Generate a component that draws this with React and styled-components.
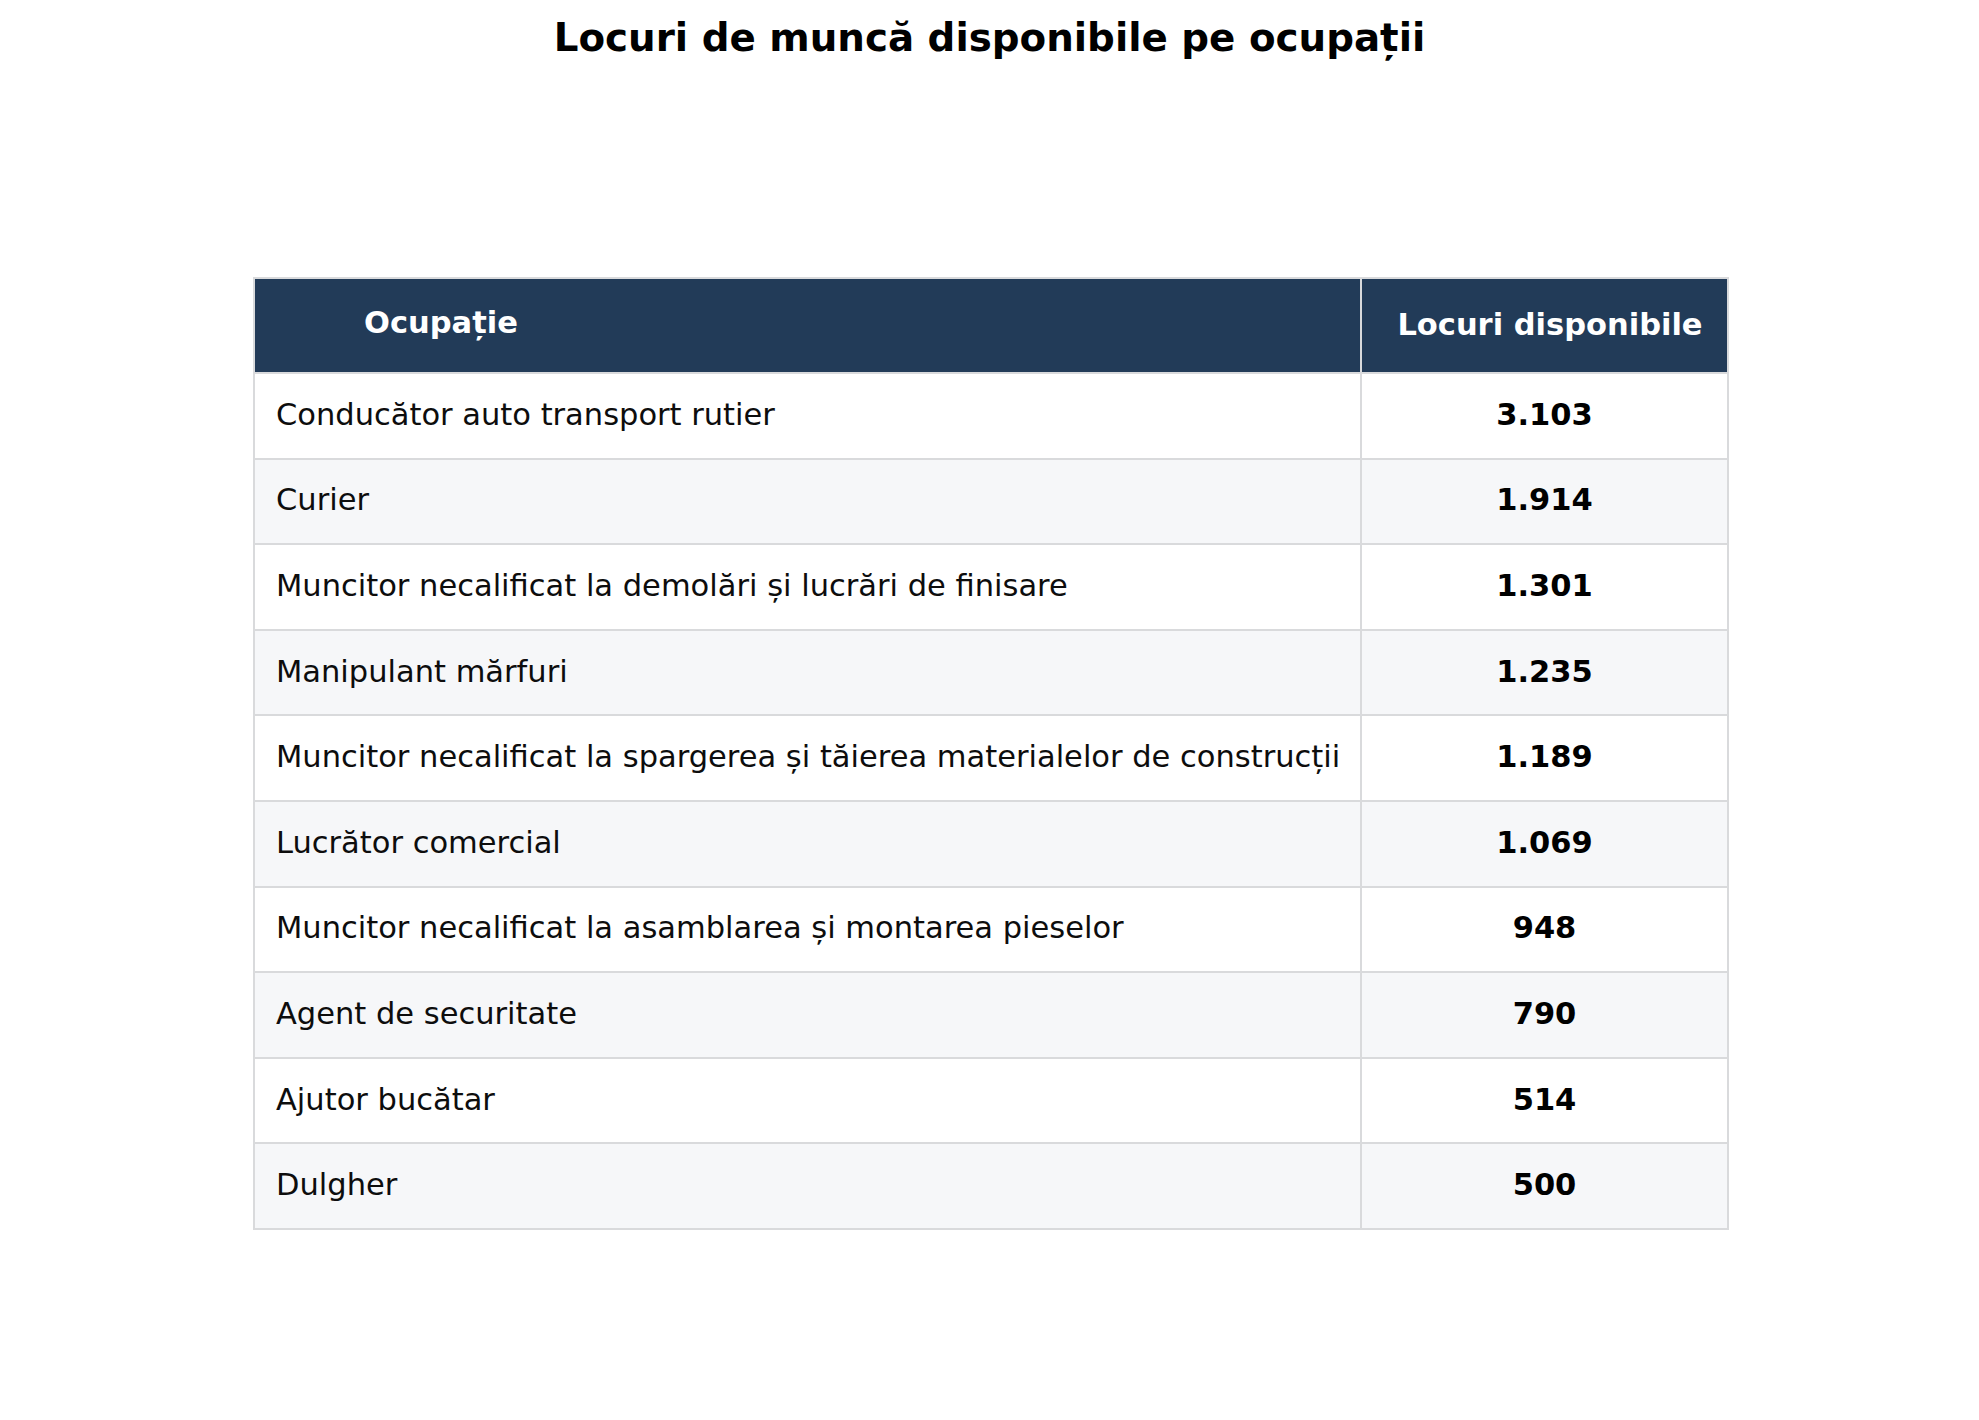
import React from 'react'
import styled, { createGlobalStyle } from 'styled-components'

const GlobalStyle = createGlobalStyle`
  html, body {
    margin: 0;
    padding: 0;
    background: #ffffff;
  }
  body {
    font-family: "DejaVu Sans", "Liberation Sans", sans-serif;
    color: #000000;
  }
`

const Page = styled.div`
  width: 1979px;
  height: 1420px;
  display: flex;
  flex-direction: column;
  background: #ffffff;
`

const Title = styled.h1`
  margin: 16px 0 0 0;
  font-size: 38.8px;
  line-height: 44px;
  font-weight: 700;
  text-align: center;
`

const Table = styled.div`
  box-sizing: border-box;
  margin: 217px 0 0 253px;
  width: 1476px;
  border: 2px solid #d9dadc;
  display: flex;
  flex-direction: column;
`

const Row = styled.div`
  box-sizing: border-box;
  display: grid;
  grid-template-columns: 1107px 1fr;
  height: ${props => props.head ? '93px' : '85.6px'};
  border-top: ${props => props.head ? 'none' : '2px solid #d9dadc'};
  background: ${props => props.head ? '#223b58' : props.alt ? '#f6f7f9' : '#ffffff'};
`

const HeadCell = styled.div`
  box-sizing: border-box;
  display: flex;
  align-items: center;
  justify-content: ${props => props.center ? 'center' : 'flex-start'};
  padding-left: ${props => props.center ? '11px' : '109px'};
  padding-bottom: ${props => props.center ? '2px' : '6px'};
  border-right: ${props => props.center ? 'none' : '2px solid #d9dadc'};
  color: #ffffff;
  font-size: 30.5px;
  font-weight: 700;
`

const Cell = styled.div`
  box-sizing: border-box;
  display: flex;
  align-items: center;
  padding-left: 21px;
  padding-bottom: 3px;
  border-right: 2px solid #d9dadc;
  font-size: 30.5px;
  color: #0d0d0d;
  white-space: nowrap;
`

const NumberCell = styled.div`
  display: flex;
  align-items: center;
  justify-content: center;
  padding-bottom: 3px;
  font-size: 30.5px;
  font-weight: 700;
  color: #000000;
`

const rows = [
  ['Conducător auto transport rutier', '3.103'],
  ['Curier', '1.914'],
  ['Muncitor necalificat la demolări și lucrări de finisare', '1.301'],
  ['Manipulant mărfuri', '1.235'],
  ['Muncitor necalificat la spargerea și tăierea materialelor de construcții', '1.189'],
  ['Lucrător comercial', '1.069'],
  ['Muncitor necalificat la asamblarea și montarea pieselor', '948'],
  ['Agent de securitate', '790'],
  ['Ajutor bucătar', '514'],
  ['Dulgher', '500'],
]

const App = () => {
  return (
    <Page>
      <GlobalStyle />
      <Title>Locuri de muncă disponibile pe ocupații</Title>
      <Table>
        <Row head>
          <HeadCell>Ocupație</HeadCell>
          <HeadCell center>Locuri disponibile</HeadCell>
        </Row>
        {rows.map(([name, count], i) => (
          <Row key={name} alt={i % 2 === 1}>
            <Cell>{name}</Cell>
            <NumberCell>{count}</NumberCell>
          </Row>
        ))}
      </Table>
    </Page>
  )
}

export default App
